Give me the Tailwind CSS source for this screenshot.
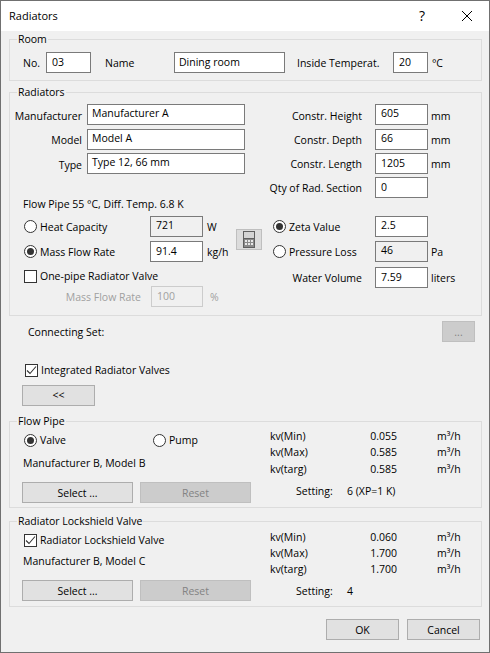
<!DOCTYPE html>
<html lang="en"><head>
<meta charset="utf-8"/>
<title>Radiators</title>
<script src="https://cdn.jsdelivr.net/npm/@tailwindcss/browser@4"></script>
</head>
<body class="bg-[#f0f0f0]">
<div class="w-[490px] h-[653px] overflow-hidden border border-[#707070] bg-[#f0f0f0] text-black font-['Open_Sans',sans-serif] text-[10.5px] leading-4">

<!-- title bar -->
<div class="h-[30px] bg-white flex items-center pl-[8px]">
  <span class="flex-1 text-[11px]">Radiators</span>
  <span class="text-[14px] w-[20px] text-center">?</span>
  <svg class="w-[12px] h-[12px] ml-[29px] mr-[16px]" viewBox="0 0 12 12" fill="none" stroke="#000" stroke-width="1"><path d="M1 1l10 10M11 1L1 11"/></svg>
</div>

<div class="ml-[8px] mt-px w-[473px]">

<!-- room -->
<fieldset class="border border-[#dcdcdc]">
  <legend class="ml-[7px] px-px leading-[15px]">Room</legend>
  <div class="flex items-center h-[21px] mt-[5px] mb-[7px]">
    <span class="ml-[13px] w-[23px]">No.</span>
    <div class="w-[45px] h-[21px] border border-[#7a7a7a] bg-white px-[5px] leading-[18px]">03</div>
    <span class="ml-[14px] w-[69px]">Name</span>
    <div class="w-[111px] h-[21px] border border-[#7a7a7a] bg-white px-[4px] leading-[18px]">Dining room</div>
    <span class="ml-[12px] w-[96px]">Inside Temperat.</span>
    <div class="w-[35px] h-[21px] border border-[#7a7a7a] bg-white px-[5px] leading-[18px]">20</div>
    <span class="ml-[4px] tracking-tight">°C</span>
  </div>
</fieldset>

<!-- radiators -->
<fieldset class="mt-[4px] border border-[#dcdcdc]">
  <legend class="ml-[7px] px-px leading-[15px]">Radiators</legend>
  <div class="flex pt-[4px] pb-[8px]">

    <div class="w-[252px]">
      <div class="flex items-center h-[21px]">
        <span class="w-[72px] pt-[2px] flex justify-end whitespace-nowrap">Manufacturer</span>
        <div class="ml-[5px] w-[158px] h-[21px] border border-[#7a7a7a] bg-white px-[4px] leading-[17px]">Manufacturer A</div>
      </div>
      <div class="flex items-center h-[21px] mt-[4px]">
        <span class="w-[72px] pt-px flex justify-end">Model</span>
        <div class="ml-[5px] w-[158px] h-[21px] border border-[#7a7a7a] bg-white px-[4px] leading-[17px]">Model A</div>
      </div>
      <div class="flex items-center h-[21px] mt-[3px]">
        <span class="w-[72px] pt-[2px] flex justify-end">Type</span>
        <div class="ml-[5px] w-[158px] h-[21px] border border-[#7a7a7a] bg-white px-[4px] leading-[17px]">Type 12, 66 mm</div>
      </div>

      <div class="mt-[22px] ml-[13px] h-4">Flow Pipe 55 °C, Diff. Temp. 6.8 K</div>

      <div class="flex mt-[4px]">
        <div class="w-[227px]">
          <div class="flex items-center h-[21px] pl-[14px]">
            <span class="w-[13px] h-[13px] rounded-full border border-[#333] bg-white"></span>
            <span class="ml-[3px] w-[110px]">Heat Capacity</span>
            <div class="w-[53px] h-[21px] border border-[#7a7a7a] bg-[#f0f0f0] px-[5px] leading-[17px]">721</div>
            <span class="ml-[4px]">W</span>
          </div>
          <div class="flex items-center h-[21px] mt-[4px] pl-[14px]">
            <span class="w-[13px] h-[13px] rounded-full border border-[#333] bg-white flex items-center justify-center"><span class="w-[7px] h-[7px] rounded-full bg-[#333]"></span></span>
            <span class="ml-[3px] w-[110px]">Mass Flow Rate</span>
            <div class="w-[53px] h-[21px] border border-[#7a7a7a] bg-white px-[5px] leading-[18px]">91.4</div>
            <span class="ml-[4px]">kg/h</span>
          </div>
          <div class="flex items-center h-[13px] mt-[8px] pl-[14px]">
            <span class="w-[13px] h-[13px] border border-[#333] bg-white"></span>
            <span class="ml-[3px] pb-[2px]">One-pipe Radiator Valve</span>
          </div>
          <div class="flex items-center h-[21px] mt-[3px] text-[#a0a0a0]">
            <span class="w-[131px] flex justify-end">Mass Flow Rate</span>
            <div class="ml-[10px] w-[52px] h-[21px] border border-[#cccccc] bg-[#f0f0f0] px-[5px] leading-[18px]">100</div>
            <span class="ml-[7px]">%</span>
          </div>
        </div>
        <div class="ml-0 mt-[13px] w-[26px] h-[21px] border border-[#bfbfbf] bg-[#dcdcdc] flex items-center justify-center">
          <svg class="w-[12px] h-[17px]" viewBox="0 0 12 17"><rect width="12" height="17" fill="#5f5f5f"/><rect x="1" y="1" width="10" height="6" fill="#d4d4d4"/><rect x="1" y="8" width="10" height="8" fill="#8a8a8a"/><path fill="#e8e8e8" d="M2 9h2v2H2zM5 9h2v2H5zM8 9h2v2H8zM2 12h2v2H2zM5 12h2v2H5zM8 12h2v2H8z"/></svg>
        </div>
      </div>
    </div>

    <div class="pl-[11px]">
      <div class="flex items-center h-[21px]">
        <span class="w-[89px] pt-[2px] flex justify-end whitespace-nowrap">Constr. Height</span>
        <div class="ml-[13px] w-[53px] h-[21px] border border-[#7a7a7a] bg-white px-[5px] leading-[17px]">605</div>
        <span class="ml-[3px] pt-[2px]">mm</span>
      </div>
      <div class="flex items-center h-[21px] mt-[4px]">
        <span class="w-[89px] flex justify-end whitespace-nowrap">Constr. Depth</span>
        <div class="ml-[13px] w-[53px] h-[21px] border border-[#7a7a7a] bg-white px-[5px] leading-[17px]">66</div>
        <span class="ml-[3px]">mm</span>
      </div>
      <div class="flex items-center h-[21px] mt-[3px]">
        <span class="w-[89px] flex justify-end whitespace-nowrap">Constr. Length</span>
        <div class="ml-[13px] w-[53px] h-[21px] border border-[#7a7a7a] bg-white px-[5px] leading-[18px]">1205</div>
        <span class="ml-[3px]">mm</span>
      </div>
      <div class="flex items-center h-[21px] mt-[3px]">
        <span class="w-[89px] flex justify-end whitespace-nowrap">Qty of Rad. Section</span>
        <div class="ml-[13px] w-[53px] h-[21px] border border-[#7a7a7a] bg-white px-[5px] leading-[18px]">0</div>
      </div>

      <div class="flex items-center h-[21px] mt-[18px]">
        <span class="w-[13px] h-[13px] rounded-full border border-[#333] bg-white flex items-center justify-center"><span class="w-[7px] h-[7px] rounded-full bg-[#333]"></span></span>
        <span class="ml-[3px] w-[86px]">Zeta Value</span>
        <div class="w-[53px] h-[21px] border border-[#7a7a7a] bg-white px-[5px] leading-[17px]">2.5</div>
      </div>
      <div class="flex items-center h-[21px] mt-[4px]">
        <span class="w-[13px] h-[13px] rounded-full border border-[#333] bg-white"></span>
        <span class="ml-[3px] w-[86px]">Pressure Loss</span>
        <div class="w-[53px] h-[21px] border border-[#7a7a7a] bg-[#f0f0f0] px-[5px] leading-[17px]">46</div>
        <span class="ml-[3px]">Pa</span>
      </div>
      <div class="flex items-center h-[21px] mt-[5px]">
        <span class="w-[89px] flex justify-end">Water Volume</span>
        <div class="ml-[13px] w-[53px] h-[21px] border border-[#7a7a7a] bg-white px-[5px] leading-[18px]">7.59</div>
        <span class="ml-[3px]">liters</span>
      </div>
    </div>
  </div>
</fieldset>

<!-- connecting set -->
<div class="flex items-center justify-between h-[21px] mt-[5px] pl-[19px] pr-[7px]">
  <span>Connecting Set:</span>
  <div class="w-[33px] h-[21px] border border-[#bfbfbf] bg-[#cccccc] text-[#838383] text-center leading-[20px]">...</div>
</div>
<div class="flex items-center h-[13px] mt-[22px] pl-[16px]">
  <span class="w-[13px] h-[13px] border border-[#333] bg-white flex items-center justify-center">
    <svg class="w-[11px] h-[11px]" viewBox="0 0 11 11" fill="none" stroke="#333" stroke-width="1.1"><path d="M1 5.5l3 3 6-7"/></svg>
  </span>
  <span class="ml-[3px] pb-[2px]">Integrated Radiator Valves</span>
</div>
<div class="mt-[8px] ml-[13px] w-[73px] h-[21px] border border-[#adadad] bg-[#e1e1e1] text-center leading-[18px]">&lt;&lt;</div>

<!-- flow pipe -->
<fieldset class="mt-[8px] border border-[#dcdcdc]">
  <legend class="ml-[7px] px-px leading-[15px]">Flow Pipe</legend>
  <div class="flex pb-[4px]">
    <div class="w-[260px] pt-[5px]">
      <div class="flex items-center h-[13px] pl-[14px]">
        <span class="w-[13px] h-[13px] rounded-full border border-[#333] bg-white flex items-center justify-center"><span class="w-[7px] h-[7px] rounded-full bg-[#333]"></span></span>
        <span class="ml-[3px] pb-[2px] w-[113px]">Valve</span>
        <span class="w-[13px] h-[13px] rounded-full border border-[#333] bg-white"></span>
        <span class="ml-[3px] pb-[2px]">Pump</span>
      </div>
      <div class="mt-[8px] ml-[13px] h-4">Manufacturer B, Model B</div>
      <div class="flex gap-[7px] mt-[11px] ml-[12px]">
        <div class="w-[111px] h-[21px] border border-[#adadad] bg-[#e1e1e1] text-center leading-[20px]">Select ...</div>
        <div class="w-[111px] h-[21px] border border-[#bfbfbf] bg-[#cccccc] text-[#838383] text-center leading-[20px]">Reset</div>
      </div>
    </div>
    <div class="-mt-px">
      <div class="flex h-4"><span class="w-[60px]">kv(Min)</span><span class="w-[67px] text-right">0.055</span><span class="ml-[40px]">m³/h</span></div>
      <div class="flex h-4"><span class="w-[60px]">kv(Max)</span><span class="w-[67px] text-right">0.585</span><span class="ml-[40px]">m³/h</span></div>
      <div class="flex h-4 mt-px"><span class="w-[60px]">kv(targ)</span><span class="w-[67px] text-right">0.585</span><span class="ml-[40px]">m³/h</span></div>
      <div class="flex h-4 mt-[6px] pl-[26px]"><span class="w-[51px]">Setting:</span><span>6 (XP=1 K)</span></div>
    </div>
  </div>
</fieldset>

<!-- lockshield valve -->
<fieldset class="mt-[6px] border border-[#dcdcdc]">
  <legend class="ml-[7px] px-px leading-[15px]">Radiator Lockshield Valve</legend>
  <div class="flex pb-[5px]">
    <div class="w-[260px] pt-[5px]">
      <div class="flex items-center h-[13px] pl-[14px]">
        <span class="w-[13px] h-[13px] border border-[#333] bg-white flex items-center justify-center">
          <svg class="w-[11px] h-[11px]" viewBox="0 0 11 11" fill="none" stroke="#333" stroke-width="1.1"><path d="M1 5.5l3 3 6-7"/></svg>
        </span>
        <span class="ml-[3px] pb-[2px]">Radiator Lockshield Valve</span>
      </div>
      <div class="mt-[6px] ml-[13px] h-4">Manufacturer B, Model C</div>
      <div class="flex gap-[7px] mt-[11px] ml-[12px]">
        <div class="w-[111px] h-[21px] border border-[#adadad] bg-[#e1e1e1] text-center leading-[20px]">Select ...</div>
        <div class="w-[111px] h-[21px] border border-[#bfbfbf] bg-[#cccccc] text-[#838383] text-center leading-[20px]">Reset</div>
      </div>
    </div>
    <div>
      <div class="flex h-4"><span class="w-[60px]">kv(Min)</span><span class="w-[67px] text-right">0.060</span><span class="ml-[40px]">m³/h</span></div>
      <div class="flex h-4"><span class="w-[60px]">kv(Max)</span><span class="w-[67px] text-right">1.700</span><span class="ml-[40px]">m³/h</span></div>
      <div class="flex h-4"><span class="w-[60px]">kv(targ)</span><span class="w-[67px] text-right">1.700</span><span class="ml-[40px]">m³/h</span></div>
      <div class="flex h-4 mt-[6px] pl-[26px]"><span class="w-[51px]">Setting:</span><span>4</span></div>
    </div>
  </div>
</fieldset>

<!-- dialog buttons -->
<div class="flex justify-end gap-[8px] mt-[12px] pr-[2px]">
  <div class="w-[73px] h-[21px] border border-[#adadad] bg-[#e1e1e1] text-center leading-[20px]">OK</div>
  <div class="w-[73px] h-[21px] border border-[#adadad] bg-[#e1e1e1] text-center leading-[20px]">Cancel</div>
</div>

</div>
</div>
</body></html>
